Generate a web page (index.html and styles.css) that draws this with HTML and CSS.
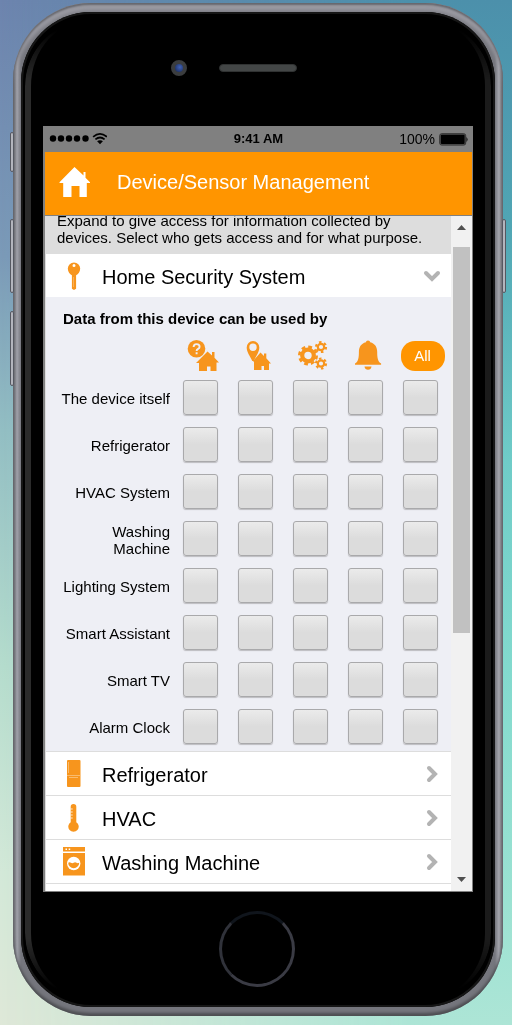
FILE: index.html
```html
<!DOCTYPE html>
<html lang="en">
<head>
<meta charset="utf-8">
<meta name="viewport" content="width=device-width, initial-scale=1">
<title>Device/Sensor Management</title>
<link rel="stylesheet" href="styles.css">
</head>
<body>
<div class="phone">
  <span class="side-key mute"></span>
  <span class="side-key volume-up"></span>
  <span class="side-key volume-down"></span>
  <span class="side-key power"></span>
  <div class="bezel">
    <div class="earpiece">
      <span class="camera"></span>
      <span class="speaker"></span>
    </div>
    <div class="screen">
      <div class="status">
        <div class="signal">
          <svg width="58" height="14" viewBox="0 0 58 14">
            <g fill="#000"><circle cx="4" cy="6.500" r="3.200"/><circle cx="12" cy="6.500" r="3.200"/><circle cx="20" cy="6.500" r="3.200"/><circle cx="28" cy="6.500" r="3.200"/><circle cx="36.500" cy="6.500" r="3.200"/><path d="M51 8.200q1.700 0 2.900 1.100l-2.900 3-2.900-3q1.200-1.100 2.900-1.100z"/></g>
            <g fill="none" stroke="#000" stroke-width="1.700"><path d="M46.400 7.400q4.600-3.800 9.200 0"/><path d="M44.100 4.800q6.900-5.800 13.800 0"/></g>
          </svg>
        </div>
        <strong class="time">9:41 AM</strong>
        <div class="battery">100%
          <svg width="29" height="13" viewBox="0 0 29 13"><rect x=".7" y=".7" width="26" height="11.400" rx="2" fill="#555" stroke="#333" stroke-width="1"/><rect x="1.800" y="1.800" width="23.800" height="9.200" rx="1"/><path d="M27.500 4q2 2.400 0 5z"/></svg>
        </div>
      </div>
      <div class="app">
        <header class="topbar">
          <a class="home" href="#">
            <svg width="32" height="32" viewBox="0 0 32 32" fill="#fff"><path d="M15.500 1 24.500 9.500V6H26.500v5.700L31 16.300v.8h-3.200V31h-7.300V20h-8v11H4.200V17.100H.500v-.8z"/></svg>
          </a>
          <h1 class="title">Device/Sensor Management</h1>
        </header>
        <div class="viewport">
          <main class="content">
            <p class="intro">Expand to give access for information collected by devices. Select who gets access and for what purpose.</p>
            <section class="device">
              <button class="device-row" aria-expanded="true">
                <svg class="device-icon" viewBox="0 0 30 30"><path fill="#f7951d" fill-rule="evenodd" d="M15 1.500a6.200 6.200 0 0 1 6.200 6c0 3.500-2 5.500-4.100 6.800v13.500L15 29l-2.100-1.300V14.300c-2.100-1.300-4.100-3.300-4.100-6.800a6.200 6.200 0 0 1 6.200-6zm0 1.500a1.500 1.500 0 1 0 0 3 1.500 1.500 0 0 0 0-3z"/><path d="M14.500 16v10" stroke="#fbc27e" stroke-width=".6"/></svg>
                <span class="device-name">Home Security System</span>
                <svg class="chevron" viewBox="0 0 18 18"><path d="M3 6l6 6 6-6"/></svg>
              </button>
              <div class="panel">
                <h2 class="panel-title">Data from this device can be used by</h2>
                <table class="access">
                  <thead>
                    <tr>
                      <td class="label"></td>
                      <td class="cell"><svg class="use-icon" viewBox="0 0 32 32" fill="#f7951d"><path d="M20.500 11.500 25 15.500V12h2.500V17.800L32 22.500h-2.500V31h-6v-4.500h-3.500V31H12v-8H9z"/><circle cx="9.500" cy="8.800" r="8.800"/><path d="M6.600 7q0-2.900 3-2.900t3 2.600q0 1.400-1.500 2.200T9.600 11M9.600 12.300v2" fill="none" stroke="#eeeff5" stroke-width="1.900"/></svg></td>
                      <td class="cell"><svg class="use-icon" viewBox="0 0 32 32" fill="#f7951d"><path d="M18.500 12.500 22 16V13.500h2.300v4.800L29 23.500h-2V30h-5v-4h-2.500v4H12v-8l-1-1z"/><path fill-rule="evenodd" d="M11 1a6.300 6.300 0 0 1 6.300 6.500c0 4.500-3 8-5.500 13.500h-1.500C7.700 15.500 4.700 12 4.700 7.500A6.300 6.300 0 0 1 11 1zm0 2.500a3.700 3.700 0 1 0 0 7.400 3.700 3.700 0 0 0 0-7.400z"/></svg></td>
                      <td class="cell"><svg class="use-icon" viewBox="0 0 32 32" fill="none" stroke="#f7951d"><circle cx="11" cy="15.500" r="5.800" stroke-width="4.200"/><circle cx="11" cy="15.500" r="8.700" stroke-width="2.600" stroke-dasharray="3.800 3.030"/><circle cx="24" cy="7" r="3.200" stroke-width="2.200"/><circle cx="24" cy="7" r="5" stroke-width="2.200" stroke-dasharray="2.500 2.736"/><circle cx="24" cy="23.500" r="3.200" stroke-width="2.200"/><circle cx="24" cy="23.500" r="5" stroke-width="2.200" stroke-dasharray="2.500 2.736"/></svg></td>
                      <td class="cell"><svg class="use-icon" viewBox="0 0 32 32" fill="#f7951d"><path d="M16 .500q2 0 2.200 1.700c5 1.300 7 5 7 9.800 0 5.500.5 9.500 3.900 11.500v1.300H3V23.500c3.400-2 3.900-6 3.900-11.500 0-4.800 2-8.500 7-9.800Q14 .500 16 .500z"/><path d="M12.500 26.500h7q-.5 3.200-3.500 3.200t-3.500-3.200z"/></svg></td>
                      <td class="cell"><button class="all">All</button></td>
                    </tr>
                  </thead>
                  <tbody>
                    <tr><th class="label" scope="row" id="self">The device itself</th><td class="cell"><input class="tick" type="checkbox" aria-labelledby="self"></td><td class="cell"><input class="tick" type="checkbox" aria-labelledby="self"></td><td class="cell"><input class="tick" type="checkbox" aria-labelledby="self"></td><td class="cell"><input class="tick" type="checkbox" aria-labelledby="self"></td><td class="cell"><input class="tick" type="checkbox" aria-labelledby="self"></td></tr>
                    <tr><th class="label" scope="row" id="fridge">Refrigerator</th><td class="cell"><input class="tick" type="checkbox" aria-labelledby="fridge"></td><td class="cell"><input class="tick" type="checkbox" aria-labelledby="fridge"></td><td class="cell"><input class="tick" type="checkbox" aria-labelledby="fridge"></td><td class="cell"><input class="tick" type="checkbox" aria-labelledby="fridge"></td><td class="cell"><input class="tick" type="checkbox" aria-labelledby="fridge"></td></tr>
                    <tr><th class="label" scope="row" id="hvac">HVAC System</th><td class="cell"><input class="tick" type="checkbox" aria-labelledby="hvac"></td><td class="cell"><input class="tick" type="checkbox" aria-labelledby="hvac"></td><td class="cell"><input class="tick" type="checkbox" aria-labelledby="hvac"></td><td class="cell"><input class="tick" type="checkbox" aria-labelledby="hvac"></td><td class="cell"><input class="tick" type="checkbox" aria-labelledby="hvac"></td></tr>
                    <tr><th class="label" scope="row" id="washer">Washing Machine</th><td class="cell"><input class="tick" type="checkbox" aria-labelledby="washer"></td><td class="cell"><input class="tick" type="checkbox" aria-labelledby="washer"></td><td class="cell"><input class="tick" type="checkbox" aria-labelledby="washer"></td><td class="cell"><input class="tick" type="checkbox" aria-labelledby="washer"></td><td class="cell"><input class="tick" type="checkbox" aria-labelledby="washer"></td></tr>
                    <tr><th class="label" scope="row" id="lighting">Lighting System</th><td class="cell"><input class="tick" type="checkbox" aria-labelledby="lighting"></td><td class="cell"><input class="tick" type="checkbox" aria-labelledby="lighting"></td><td class="cell"><input class="tick" type="checkbox" aria-labelledby="lighting"></td><td class="cell"><input class="tick" type="checkbox" aria-labelledby="lighting"></td><td class="cell"><input class="tick" type="checkbox" aria-labelledby="lighting"></td></tr>
                    <tr><th class="label" scope="row" id="assistant">Smart Assistant</th><td class="cell"><input class="tick" type="checkbox" aria-labelledby="assistant"></td><td class="cell"><input class="tick" type="checkbox" aria-labelledby="assistant"></td><td class="cell"><input class="tick" type="checkbox" aria-labelledby="assistant"></td><td class="cell"><input class="tick" type="checkbox" aria-labelledby="assistant"></td><td class="cell"><input class="tick" type="checkbox" aria-labelledby="assistant"></td></tr>
                    <tr><th class="label" scope="row" id="tv">Smart TV</th><td class="cell"><input class="tick" type="checkbox" aria-labelledby="tv"></td><td class="cell"><input class="tick" type="checkbox" aria-labelledby="tv"></td><td class="cell"><input class="tick" type="checkbox" aria-labelledby="tv"></td><td class="cell"><input class="tick" type="checkbox" aria-labelledby="tv"></td><td class="cell"><input class="tick" type="checkbox" aria-labelledby="tv"></td></tr>
                    <tr><th class="label" scope="row" id="alarm">Alarm Clock</th><td class="cell"><input class="tick" type="checkbox" aria-labelledby="alarm"></td><td class="cell"><input class="tick" type="checkbox" aria-labelledby="alarm"></td><td class="cell"><input class="tick" type="checkbox" aria-labelledby="alarm"></td><td class="cell"><input class="tick" type="checkbox" aria-labelledby="alarm"></td><td class="cell"><input class="tick" type="checkbox" aria-labelledby="alarm"></td></tr>
                  </tbody>
                </table>
              </div>
            </section>
            <section class="device">
              <button class="device-row" aria-expanded="false">
                <svg class="device-icon" viewBox="0 0 30 30"><rect x="8" y="1" width="13.500" height="27" rx="1" fill="#f7951d"/><path d="M8 16.500h13.500M10 18.500h9M9.500 3v11" stroke="#fbca8e" stroke-width=".7" fill="none"/></svg>
                <span class="device-name">Refrigerator</span>
                <svg class="chevron" viewBox="0 0 18 18"><path d="M6 3l6 6-6 6"/></svg>
              </button>
            </section>
            <section class="device">
              <button class="device-row" aria-expanded="false">
                <svg class="device-icon" viewBox="0 0 30 30"><path fill="#f7951d" d="M14.500 1a2.800 2.800 0 0 1 2.800 2.800v15.400a5.200 5.200 0 1 1-5.600 0V3.800A2.800 2.800 0 0 1 14.500 1z"/><path d="M11.700 6h2M11.700 9h2M11.700 12h2M11.700 15h2" stroke="#fff" stroke-width=".8"/></svg>
                <span class="device-name">HVAC</span>
                <svg class="chevron" viewBox="0 0 18 18"><path d="M6 3l6 6-6 6"/></svg>
              </button>
            </section>
            <section class="device">
              <button class="device-row" aria-expanded="false">
                <svg class="device-icon" viewBox="0 0 30 30"><path fill="#f7951d" d="M4 0h22v4.500H4zM4 6h22v22.500H4z"/><path d="M6.500 2.300h1.500M9.700 2.300h1.500" stroke="#fff" stroke-width="1.500"/><circle cx="14.700" cy="16.500" r="6.700" fill="#fff"/><path fill="#f7951d" d="M9.200 15.700q1.400-.9 2.750 0t2.750 0 2.750 0 2.750 0a5.500 5.500 0 1 1-11 0z"/></svg>
                <span class="device-name">Washing Machine</span>
                <svg class="chevron" viewBox="0 0 18 18"><path d="M6 3l6 6-6 6"/></svg>
              </button>
            </section>
            <section class="device">
              <button class="device-row" aria-expanded="false">
                <svg class="device-icon" viewBox="0 0 30 30"><path fill="#fbca8e" d="M7 0h16v3H7z"/></svg>
              </button>
            </section>
          </main>
          <div class="scrollbar">
            <svg class="arrow" viewBox="0 0 9 5"><path d="M4.500 0 9 5H0z"/></svg>
            <div class="track"><div class="thumb"></div></div>
            <svg class="arrow" viewBox="0 0 9 5"><path d="M0 0h9L4.500 5z"/></svg>
          </div>
        </div>
      </div>
    </div>
    <div class="chin"><span class="home-button"></span></div>
  </div>
</div>
</body>
</html>
```
FILE: styles.css
```css
* { box-sizing: border-box; }

body {
  height: 100vh;
  margin: 0;
  padding: 3px 9px 9px 13px;
  font-family: "Liberation Sans", Arial, sans-serif;
  color: #000;
  background: linear-gradient(#6d84ae, #7b9ab8 25%, #93bec3 42%, #b5dccd 65%, #d3e8d8 85%, #dfe8d8);
}

body::before {
  content: "";
  position: fixed;
  inset: 0;
  background: linear-gradient(#4c90ab, #50a6b4 22%, #6fccc8 45%, #82dace 65%, #9be2d2 88%, #ade5d6);
  mask-image: linear-gradient(to right, transparent, #000 80%);
}

.phone {
  position: relative;
  height: 100%;
  padding: 9px 8px;
  border-radius: 78px;
  background: linear-gradient(to right, #55565d, #a0a1aa 4px, #75767d 8px, #75767d calc(100% - 8px), #a5a6ae calc(100% - 4px), #5a5b62);
  box-shadow: inset 0 2px 2px #66676d, inset 0 -3px 3px #4d4e52, inset 0 8px 4px #9a9aa2;
}

.side-key {
  position: absolute;
  left: -3px;
  width: 4px;
  height: 74px;
  border: 1px solid #555861;
  border-radius: 2px;
  background: #b3b5bd;
}
.mute { top: 129px; height: 40px; }
.volume-up { top: 216px; }
.volume-down { top: 308px; height: 75px; }
.power { top: 216px; left: auto; right: -3px; }

.bezel {
  position: relative;
  display: flex;
  flex-direction: column;
  height: 100%;
  padding: 0 22px;
  border-radius: 70px;
  background: #000;
  box-shadow: inset 0 0 0 2px #161616;
}
.bezel::before {
  content: "";
  position: absolute;
  inset: 8px 4px;
  border: solid transparent;
  border-width: 0 6px;
  border-left-color: #2b2b2b;
  border-right-color: #1b1b1b;
  border-radius: 66px;
  mask-image: linear-gradient(transparent 10px, #000 60px, #000 calc(100% - 60px), transparent calc(100% - 10px));
}

.earpiece {
  display: grid;
  grid-template-columns: 1fr auto 1fr;
  align-items: center;
  gap: 32px;
  padding: 48px 0 50px;
}
.camera {
  justify-self: end;
  width: 16px;
  height: 16px;
  border: 4px solid #3b3d3f;
  border-radius: 50%;
  background: radial-gradient(circle at 60% 40%, #3f61b8, #17264f);
}
.speaker {
  width: 78px;
  height: 8px;
  border: 1px solid #303232;
  border-radius: 4px;
  background: #434646;
}

.screen {
  position: relative;
  display: flex;
  flex: 1;
  flex-direction: column;
  min-height: 0;
  background: #808080;
}
.status {
  display: grid;
  grid-template-columns: 1fr auto 1fr;
  align-items: center;
  padding: 0 5px 0 6px;
  font-size: 13px;
  line-height: 26px;
}
.signal, .battery { display: flex; align-items: center; }
.battery { justify-content: flex-end; gap: 4px; font-size: 14px; }

.app {
  display: flex;
  flex: 1;
  flex-direction: column;
  min-height: 0;
  padding: 0 1px 1px 2px;
}
.topbar {
  display: flex;
  align-items: center;
  gap: 26px;
  padding: 14px 14px 17px;
  border-bottom: 1px solid #808080;
  background: #ff9500;
}
.home, .home svg { display: block; }
.title {
  margin: 0;
  font-size: 20px;
  font-weight: 400;
  line-height: 32px;
  color: #fff;
}

.viewport { display: flex; flex: 1; min-height: 0; background: #f1f1f1; }
.content { flex: 1; overflow: hidden; background: #fff; }
.intro {
  margin: -4px 0 0;
  padding: 0 12px 8px;
  font-size: 15px;
  line-height: 17px;
  background: #ddd;
}

.device { border-left: 1px solid #ddd; }
.device + .device { border-top: 1px solid #ddd; }
.device-row {
  display: flex;
  align-items: center;
  width: 100%;
  padding: 7px 10px 6px 13px;
  border: 0;
  background: #fff;
  font: inherit;
  font-size: 20px;
  line-height: 30px;
  text-align: left;
  color: #000;
}
.device-icon { width: 30px; height: 30px; margin-right: 13px; }
.device-name { flex: 1; padding-top: 2px; line-height: 28px; }
.chevron {
  width: 18px;
  height: 18px;
  overflow: visible;
  fill: none;
  stroke: #b3b3b3;
  stroke-width: 4;
  stroke-linecap: round;
}

.panel { padding: 13px 3px 1px 0; background: #eeeff5; }
.panel-title {
  margin: 0 17px 10px;
  font-size: 15px;
  line-height: 18px;
}
.access { width: 100%; border-collapse: collapse; table-layout: fixed; }
.label {
  padding: 2px 3px 0 14px;
  font-size: 15px;
  font-weight: 400;
  line-height: 17px;
  text-align: right;
}
.cell { width: 55px; height: 47px; padding: 0; text-align: center; }
thead .cell { height: 36px; padding-left: 4px; }
.use-icon { display: block; width: 32px; height: 32px; margin: 0 auto; overflow: visible; }
.all {
  display: block;
  width: 44px;
  margin: 0 auto;
  padding: 0;
  border: 0;
  border-radius: 14px;
  background: #ff9500;
  font: inherit;
  font-size: 15px;
  line-height: 30px;
  color: #fff;
}
.tick {
  display: block;
  width: 35px;
  height: 35px;
  margin: 0 auto;
  appearance: none;
  border: 1px solid #a9a9ab;
  border-radius: 3px;
  background: linear-gradient(#ebebeb, #dcdcdc 50%);
  box-shadow: 0 1px 1px #bcbcc0;
}

.scrollbar {
  display: flex;
  flex-direction: column;
  width: 21px;
  padding: 9px 2px;
}
.arrow { width: 9px; height: 5px; margin: 0 4px; fill: #505050; }
.track { flex: 1; margin: 17px 0 8px; }
.thumb { height: 62%; background: #c1c1c1; }

.chin { padding: 19px 2px 20px 0; }
.home-button {
  display: block;
  width: 76px;
  height: 76px;
  margin: 0 auto;
  border: 3px solid;
  border-color: #10151c #3a3b44 #3a3b44 #30323a;
  border-radius: 50%;
}
```
